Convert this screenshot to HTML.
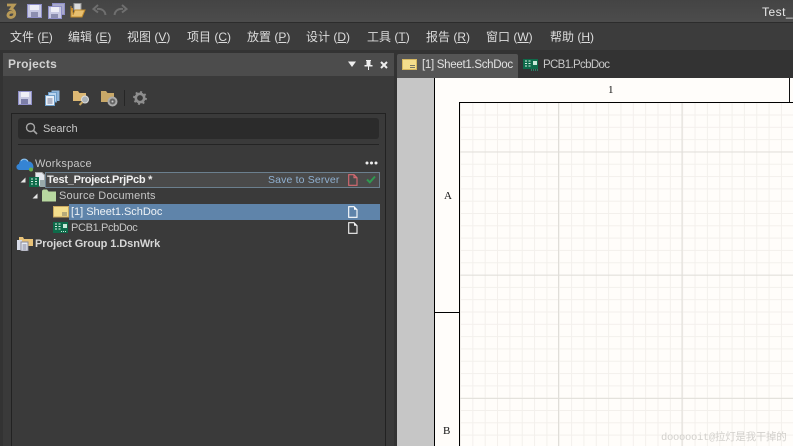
<!DOCTYPE html>
<html><head><meta charset="utf-8"><style>
html,body{margin:0;padding:0;background:#333}
#r{position:relative;width:793px;height:446px;overflow:hidden;background:#333;font-family:"Liberation Sans","Noto Sans CJK SC",sans-serif;color:#d8d8d8}
#r div,#r svg{position:absolute}
.t{font-size:11px;white-space:nowrap;letter-spacing:.2px;line-height:14px}
.m{top:29px;font-size:12px;white-space:nowrap;color:#dcdcdc;line-height:16px;letter-spacing:0}
.m u{text-decoration:underline;text-underline-offset:1px}
</style></head><body><div id="r">
<div style="left:0;top:0;width:793px;height:22px;background:linear-gradient(#444,#4c4c4c)"></div>
<div style="left:0;top:22px;width:793px;height:1px;background:#2c2c2c"></div>
<div style="left:0;top:23px;width:793px;height:27px;background:#3c3c3c"></div>
<div style="left:0;top:50px;width:793px;height:396px;background:#333"></div>

<svg style="left:4px;top:2px" width="14" height="18" viewBox="0 0 14 18"><path d="M3 3L10 3L7 7C12 8 12 15 7 15.500C4 15.500 3 13 5 11C6 10 8 10 8 11.500" fill="none" stroke="#b89a58" stroke-width="2.800"/></svg>
<svg style="left:27px;top:4px" width="15" height="14" viewBox="0 0 15 14"><path d="M.500.500H14.500V13.500H.500Z" fill="#c8c9e2" stroke="#8f8fc8"/><rect x="3" y="1" width="9" height="5" fill="#eeeef6"/><rect x="4" y="8" width="7" height="5" fill="#8d8fb0"/></svg>
<svg style="left:48px;top:3px" width="17" height="16" viewBox="0 0 17 16"><path d="M4.500.500H16.500V11.500H4.500Z" fill="#a9aacb" stroke="#8f8fc8"/><path d="M.500 3.500H13.500V15.500H.500Z" fill="#c8c9e2" stroke="#8f8fc8"/><rect x="3" y="4" width="8" height="5" fill="#eeeef6"/><rect x="3" y="11" width="7" height="4" fill="#8d8fb0"/></svg>
<svg style="left:70px;top:3px" width="17" height="15" viewBox="0 0 17 15"><path d="M4 .500H11V7H4Z" fill="#ddd" stroke="#999"/><path d="M1 3V14H12L15 7H5L3 12" fill="#e8c070" stroke="#c08a2c"/><path d="M1 5L3 5V12Z" fill="#c98f30"/></svg>
<svg style="left:92px;top:4px" width="15" height="12" viewBox="0 0 15 12"><path d="M13.500 11C13 7 10 4.500 5 5M6 1L1.500 5L6 8.500" fill="none" stroke="#6f6f6f" stroke-width="2"/></svg>
<svg style="left:113px;top:4px" width="15" height="12" viewBox="0 0 15 12"><path d="M1.500 11C2 7 5 4.500 10 5M9 1L13.500 5L9 8.500" fill="none" stroke="#6f6f6f" stroke-width="2"/></svg>
<div class="t" style="left:762px;top:5px;font-size:12px;color:#e8e8e8;letter-spacing:.5px">Test_</div>

<div class="m" style="left:10px">文件 (<u>F</u>)</div>
<div class="m" style="left:68px">编辑 (<u>E</u>)</div>
<div class="m" style="left:127px">视图 (<u>V</u>)</div>
<div class="m" style="left:187px">项目 (<u>C</u>)</div>
<div class="m" style="left:247px">放置 (<u>P</u>)</div>
<div class="m" style="left:306px">设计 (<u>D</u>)</div>
<div class="m" style="left:367px">工具 (<u>T</u>)</div>
<div class="m" style="left:426px">报告 (<u>R</u>)</div>
<div class="m" style="left:486px">窗口 (<u>W</u>)</div>
<div class="m" style="left:550px">帮助 (<u>H</u>)</div>

<div style="left:3px;top:53px;width:391px;height:393px;background:#3a3a3a"></div>
<div style="left:3px;top:53px;width:391px;height:23px;background:#4c4c4c"></div>
<div class="t" style="left:8px;top:57px;font-size:12px;font-weight:bold;color:#d2d2d2;letter-spacing:.2px">Projects</div>
<svg style="left:347px;top:60px" width="46" height="10" viewBox="0 0 46 10"><path d="M1 1.500H9L5 7Z" fill="#eee"/><path d="M19 0H24V1H23.500V5H25.500V6.500H22V10H21V6.500H17.500V5H19.500V1H19Z" fill="#eee"/><path d="M34 2L40 8M40 2L34 8" stroke="#eee" stroke-width="2"/></svg>

<svg style="left:18px;top:91px" width="15" height="14" viewBox="0 0 15 14"><path d="M.500.500H13.500V13.500H.500Z" fill="#c8c9e2" stroke="#8f8fc8"/><rect x="3" y="1" width="8" height="5" fill="#eeeef6"/><rect x="3" y="8" width="7" height="5" fill="#7c7ea8"/></svg>
<svg style="left:45px;top:90px" width="15" height="16" viewBox="0 0 15 16"><path d="M6.500.500H14.500V11H6.500Z" fill="#8fb6dc"/><path d="M3.500 2.500H11.500V12H3.500Z" fill="#b8d4ee" stroke="#6d9dc8"/><path d="M.500 5.500H9.500V15.500H.500Z" fill="#e8f0f8" stroke="#6d9dc8"/><path d="M2.500 9H7.500M2.500 11H7.500M2.500 13H7.500" stroke="#557" stroke-width=".8"/></svg>
<svg style="left:73px;top:90px" width="17" height="16" viewBox="0 0 17 16"><path d="M0 1H5L6.500 3H13V11H0Z" fill="#dcb874"/><circle cx="12" cy="9.500" r="3.500" fill="#aab2b8" stroke="#ddd"/><path d="M9.500 12L6.500 15" stroke="#c9a860" stroke-width="2"/></svg>
<svg style="left:101px;top:90px" width="17" height="17" viewBox="0 0 17 17"><path d="M0 1H5L6.500 3H13V12H0Z" fill="#c8a868"/><circle cx="11.500" cy="11.500" r="4" fill="#666" stroke="#aaa" stroke-width="2"/><circle cx="11.500" cy="11.500" r="1" fill="#ccc"/></svg>
<div style="left:124px;top:90px;width:1px;height:16px;background:#262626"></div>
<svg style="left:133px;top:91px" width="14" height="14" viewBox="0 0 14 14"><circle cx="7" cy="7" r="4.200" fill="none" stroke="#8e8e8e" stroke-width="2.600"/><circle cx="7" cy="7" r="6" fill="none" stroke="#8e8e8e" stroke-width="1.800" stroke-dasharray="2 2.700"/></svg>

<div style="left:11px;top:113px;width:375px;height:333px;border:1px solid #222;border-bottom:0;box-sizing:border-box"></div>
<div style="left:18px;top:118px;width:361px;height:21px;background:#2b2b2b;border-radius:3px"></div>
<div style="left:18px;top:144px;width:361px;height:1px;background:#242424"></div>
<svg style="left:25px;top:122px" width="13" height="13" viewBox="0 0 13 13"><circle cx="5.500" cy="5.500" r="4" fill="none" stroke="#a5a5a5" stroke-width="1.400"/><path d="M8.500 8.500L12 12" stroke="#a5a5a5" stroke-width="1.600"/></svg>
<div class="t" style="left:43px;top:122px;color:#c8c8c8;letter-spacing:-.05px">Search</div>

<svg style="left:16px;top:156px" width="18" height="16" viewBox="0 0 18 16"><path d="M3.500 14C-.500 14 -.500 8.500 3 8C3.500 2.500 10 1 12.500 5.500C16 5 19 10 16.500 14Z" fill="#3584d4"/><path d="M5 5C6 3 10 2 12 5.500" fill="none" stroke="#8cc2ee" stroke-width="1.200"/><circle cx="15" cy="13.500" r="2" fill="#6ab04c"/></svg>
<div class="t" style="left:35px;top:157px;color:#c6c6c6;letter-spacing:.22px">Workspace</div>
<svg style="left:365px;top:161px" width="13" height="4" viewBox="0 0 13 4"><circle cx="2" cy="2" r="1.500" fill="#eee"/><circle cx="6.500" cy="2" r="1.500" fill="#eee"/><circle cx="11" cy="2" r="1.500" fill="#eee"/></svg>

<div style="left:45px;top:172px;width:335px;height:16px;box-sizing:border-box;background:#4a4a4a;border:1px solid #6b7f8e"></div>
<svg style="left:20px;top:177px" width="6" height="6" viewBox="0 0 6 6"><path d="M5.500.500V5.500H.500Z" fill="#e8e8e8"/></svg>
<svg style="left:29px;top:172px" width="17" height="16" viewBox="0 0 17 16"><path d="M6.500.500H13L15.500 3V14H6.500Z" fill="#e4e8ee" stroke="#aaa"/><rect x="0" y="5" width="10" height="10" fill="#0e6b4a"/><path d="M2 7H4M2 9.500H4M2 12H4M6 7H8M6 9.500H8M6 12H8" stroke="#d8f0e4"/><rect x="11" y="8" width="5" height="7" fill="#9aa"/></svg>
<div class="t" style="left:47px;top:173px;font-weight:bold;color:#f0f0f0;letter-spacing:-.25px">Test_Project.PrjPcb *</div>
<div class="t" style="left:268px;top:173px;font-size:10.500px;color:#8fb0d0;letter-spacing:.15px">Save to Server</div>
<svg style="left:348px;top:174px" width="10" height="12" viewBox="0 0 10 12"><path d="M.700.700H6L9 3.700V11.300H.700Z M6 .700V3.700H9" fill="none" stroke="#d86a72" stroke-width="1.100"/></svg>
<svg style="left:366px;top:175px" width="10" height="9" viewBox="0 0 10 9"><path d="M1 4.500L3.800 7.300L9 1.500" fill="none" stroke="#2f9a50" stroke-width="2"/></svg>

<svg style="left:32px;top:193px" width="6" height="6" viewBox="0 0 6 6"><path d="M5.500.500V5.500H.500Z" fill="#e8e8e8"/></svg>
<svg style="left:42px;top:189px" width="14" height="13" viewBox="0 0 14 13"><path d="M0 2.500C0 1 1 .500 2 .500H5L6.500 2.500H14V12.500H0Z" fill="#b8d8a0"/></svg>
<div class="t" style="left:59px;top:189px;color:#c6c6c6">Source Documents</div>

<div style="left:69px;top:204px;width:311px;height:16px;background:#5f84aa"></div>
<svg style="left:53px;top:206px" width="16" height="12" viewBox="0 0 16 12"><rect x=".500" y=".500" width="15" height="10.500" fill="#f4de8c" stroke="#c9a860"/><path d="M9 7H14M9 9H14" stroke="#776" stroke-width="1"/></svg>
<div class="t" style="left:71px;top:205px;color:#eef2f6;letter-spacing:-.02px">[1] Sheet1.SchDoc</div>
<svg style="left:348px;top:206px" width="10" height="12" viewBox="0 0 10 12"><path d="M.700.700H6L9 3.700V11.300H.700Z" fill="none" stroke="#fff" stroke-width="1.100"/><path d="M6 1V3.700H9Z" fill="#fff"/></svg>

<svg style="left:53px;top:222px" width="16" height="12" viewBox="0 0 16 12"><rect width="15" height="11" fill="#0e6b4a"/><path d="M2 2H4M2 4.500H4M2 7H4M5.500 2H7.500M5.500 4.500H7.500M5.500 7H7.500" stroke="#d8f0e4"/><rect x="10" y="2" width="4" height="4" fill="#c8e8d8"/><path d="M8 9.500H14" stroke="#c8e8d8" stroke-dasharray="1 1"/></svg>
<div class="t" style="left:71px;top:221px;color:#c6c6c6;letter-spacing:-.35px">PCB1.PcbDoc</div>
<svg style="left:348px;top:222px" width="10" height="12" viewBox="0 0 10 12"><path d="M.700.700H6L9 3.700V11.300H.700Z" fill="none" stroke="#f4f4f4" stroke-width="1.100"/><path d="M6 1V3.700H9Z" fill="#f4f4f4"/></svg>

<svg style="left:17px;top:236px" width="17" height="15" viewBox="0 0 17 15"><path d="M2 1H6L7 3H16V10H2Z" fill="#e8c278"/><rect x="0" y="4" width="5" height="10" fill="#d8dce8"/><rect x="4" y="6" width="7" height="9" fill="#e8ecf4" stroke="#889"/><path d="M5.500 9H9.500M5.500 11H9.500M5.500 13H9.500" stroke="#557" stroke-width=".8"/></svg>
<div class="t" style="left:35px;top:237px;font-weight:bold;color:#d6d6d6;letter-spacing:-.08px">Project Group 1.DsnWrk</div>

<div style="left:397px;top:54px;width:121px;height:24px;background:#555;border-radius:2px 2px 0 0"></div>
<svg style="left:402px;top:59px" width="15" height="12" viewBox="0 0 15 12"><rect x=".500" y=".500" width="14" height="10" fill="#f4de8c" stroke="#d6b860"/><path d="M8 6.500H13M8 8.500H13" stroke="#776"/></svg>
<div class="t" style="left:422px;top:58px;color:#e2e2e2;font-size:11.500px;letter-spacing:-.3px">[1] Sheet1.SchDoc</div>
<svg style="left:523px;top:59px" width="16" height="12" viewBox="0 0 16 12"><rect width="15" height="10" fill="#0e6b4a"/><path d="M2 2H4M2 4.500H4M2 7H4M5.500 2H7.500M5.500 4.500H7.500M5.500 7H7.500" stroke="#d8f0e4"/><rect x="10" y="2" width="4" height="4" fill="#c8e8d8"/><path d="M8 11H15" stroke="#2c9" stroke-dasharray="1 1"/></svg>
<div class="t" style="left:543px;top:58px;color:#c8c8c8;font-size:11.500px;letter-spacing:-.65px">PCB1.PcbDoc</div>

<div style="left:397px;top:78px;width:396px;height:368px;background:#c6c6c6"></div>
<div style="left:434px;top:78px;width:359px;height:368px;background:#fffdfa;border-left:1.500px solid #000;box-sizing:border-box"></div>
<div style="left:789px;top:78px;width:1px;height:24px;background:#111"></div>
<div style="left:459px;top:102px;width:334px;height:344px;box-sizing:border-box;border-left:1.500px solid #000;border-top:1.500px solid #000;background-color:#fffdfa;background-image:linear-gradient(90deg,#e0ded9 1px,transparent 1px),linear-gradient(#e0ded9 1px,transparent 1px),linear-gradient(90deg,#f3f0ec 1px,transparent 1px),linear-gradient(#f3f0ec 1px,transparent 1px);background-size:123.500px 100%,100% 123.200px,12.350px 100%,100% 12.320px;background-position:98px 0,0 48.500px,0 0,0 11.500px"></div>
<div style="left:434px;top:312px;width:25px;height:1px;background:#000"></div>
<div style="left:608px;top:83px;font:11px 'Liberation Serif',serif;color:#111;line-height:14px">1</div>
<div style="left:444px;top:189px;font:11px 'Liberation Serif',serif;color:#111;line-height:14px">A</div>
<div style="left:443px;top:424px;font:11px 'Liberation Serif',serif;color:#111;line-height:14px">B</div>
<div class="t" style="left:661px;top:431px;font-size:10.500px;color:#d2d0cc;letter-spacing:-.3px;font-family:'Liberation Mono','Noto Sans CJK SC',monospace">doooooit@拉灯是我干掉的</div>
</div></body></html>
